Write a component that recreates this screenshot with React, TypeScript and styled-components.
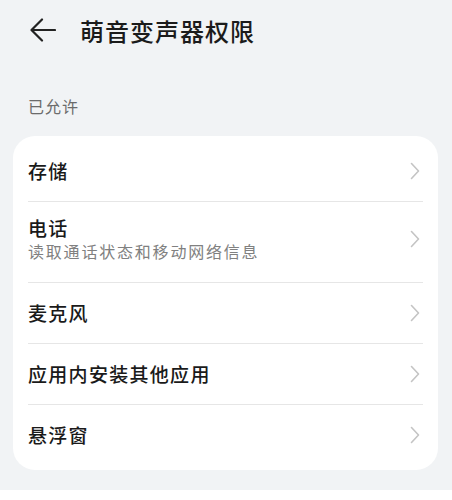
import React from "react";
import styled, { createGlobalStyle } from "styled-components";

const GlobalStyle = createGlobalStyle`
  html, body { margin: 0; padding: 0; background: #ffffff; }
  body { font-family: "Noto Sans CJK SC", "Noto Sans", sans-serif; }
`;

const Page = styled.div`
  width: 452px; height: 490px; background: #f1f3f5;
  display: flex; flex-direction: column;
`;

const Header = styled.div`
  display: flex; align-items: center; height: 60px;
  padding: 0 0 0 30px; gap: 24px;
`;

const BackBtn = styled.div`
  width: 26px; height: 26px; display: flex; align-items: center; justify-content: center;
`;

const Title = styled.div`
  font-size: 24px; font-weight: 500; color: #1b1b1b; letter-spacing: 1px;
`;

const SectionLabel = styled.div`
  padding: 34px 0 0 28px;
  font-size: 16px; color: #6b6b6b; line-height: 24px; letter-spacing: 1px;
`;

const Card = styled.div`
  margin: 18px 14px 0 13px; background: #ffffff; border-radius: 22px;
  padding: 5px 15px 5px 15px;
`;

const Row = styled.div<{ $last?: boolean; $tall?: boolean }>`
  display: flex; align-items: center; justify-content: space-between;
  height: ${(p: { $tall?: boolean }) => (p.$tall ? "74px" : "60px")};
  padding-bottom: ${(p: { $tall?: boolean }) => (p.$tall ? "6px" : "0")};
  box-sizing: content-box;
  border-bottom: ${(p: { $last?: boolean }) => (p.$last ? "none" : "1px solid #e6e6e6")};
`;

const RowText = styled.div`
  display: flex; flex-direction: column;
`;

const RowTitle = styled.div`
  font-size: 19px; font-weight: 500; color: #1a1a1a; line-height: 24px; letter-spacing: 1.3px;
`;

const RowSub = styled.div`
  font-size: 16px; color: #808080; line-height: 22px; letter-spacing: 1.8px;
`;

const Chevron = styled.svg`
  width: 10px; height: 18px; flex-shrink: 0; margin-right: 3px;
`;

const ChevronIcon = () => (
  <Chevron viewBox="0 0 10 18">
    <path d="M1.5 1.5 L8.5 9 L1.5 16.5" fill="none" stroke="#c4c4c4" strokeWidth="1.6" strokeLinecap="round" strokeLinejoin="round" />
  </Chevron>
);

const items: { title: string; sub?: string }[] = [
  { title: "存储" },
  { title: "电话", sub: "读取通话状态和移动网络信息" },
  { title: "麦克风" },
  { title: "应用内安装其他应用" },
  { title: "悬浮窗" },
];

export default function App() {
  return (
    <>
      <GlobalStyle />
      <Page>
        <Header>
          <BackBtn>
            <svg width="26" height="26" viewBox="0 0 26 26">
              <path d="M25 13 H2 M12 2.5 L1.5 13 L12 23.5" fill="none" stroke="#222" strokeWidth="2.2" strokeLinecap="round" strokeLinejoin="round" />
            </svg>
          </BackBtn>
          <Title>萌音变声器权限</Title>
        </Header>
        <SectionLabel>已允许</SectionLabel>
        <Card>
          {items.map((it, i) => (
            <Row key={it.title} $last={i === items.length - 1} $tall={!!it.sub}>
              <RowText>
                <RowTitle>{it.title}</RowTitle>
                {it.sub && <RowSub>{it.sub}</RowSub>}
              </RowText>
              <ChevronIcon />
            </Row>
          ))}
        </Card>
      </Page>
    </>
  );
}
